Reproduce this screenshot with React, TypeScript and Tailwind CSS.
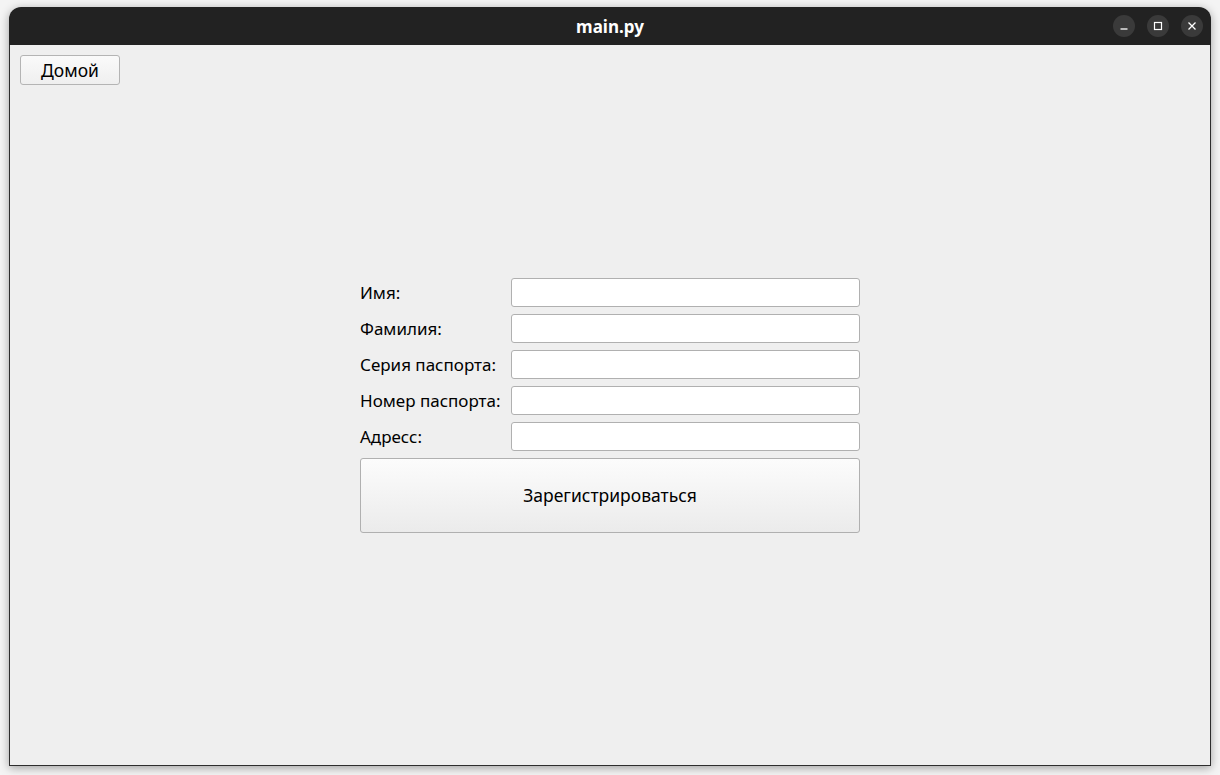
import React from "react";

const font = { fontFamily: '"Noto Sans", "DejaVu Sans", sans-serif' };

function Ctrl({ children }: { children: React.ReactNode }) {
  return (
    <div className="w-[22px] h-[22px] rounded-full bg-[#3a3a3a] flex items-center justify-center">
      {children}
    </div>
  );
}

export default function App() {
  const labels = ["Имя:", "Фамилия:", "Серия паспорта:", "Номер паспорта:", "Адресс:"];
  return (
    <div
      className="w-[1220px] h-[775px] bg-[#f4f4f4] pt-[7px] px-[9px] pb-[9px] flex"
      style={font}
    >
      <div className="flex-1 flex flex-col rounded-t-[12px] shadow-[0_2px_10px_rgba(0,0,0,0.35)]">
        <div className="h-[38px] bg-[#222222] rounded-t-[12px] flex items-center relative px-[7px]">
          <div className="flex-1 text-center text-white font-bold text-[17px] leading-none">main.py</div>
          <div className="absolute right-[8px] top-[8px] flex gap-[12px]">
            <Ctrl>
              <svg width="10" height="10" viewBox="0 0 10 10">
                <line x1="1.5" y1="8" x2="8.5" y2="8" stroke="#fff" strokeWidth="1.3" />
              </svg>
            </Ctrl>
            <Ctrl>
              <svg width="10" height="10" viewBox="0 0 10 10">
                <rect x="1.5" y="1.5" width="7" height="7" fill="none" stroke="#fff" strokeWidth="1.2" />
              </svg>
            </Ctrl>
            <Ctrl>
              <svg width="10" height="10" viewBox="0 0 10 10">
                <path d="M1.5 1.5 L8.5 8.5 M8.5 1.5 L1.5 8.5" stroke="#fff" strokeWidth="1.3" />
              </svg>
            </Ctrl>
          </div>
        </div>
        <div className="flex-1 bg-[#efefef] border-x border-b border-[#2e2e2e] p-[10px] grid">
          <div className="col-start-1 row-start-1 self-start justify-self-start">
            <button className="w-[100px] h-[30px] rounded-[3px] border border-[#b4b4b4] bg-gradient-to-b from-[#fafafa] to-[#efefef] text-[17.5px] text-black leading-none pt-[1px]">
              Домой
            </button>
          </div>
          <div className="col-start-1 row-start-1 self-center justify-self-center grid grid-cols-[151px_349px] gap-y-[7px] text-[17px] text-black">
            {labels.map((l) => (
              <React.Fragment key={l}>
                <div className="h-[29px] flex items-center leading-none">{l}</div>
                <div className="h-[29px] rounded-[3px] border border-[#b0b0b0] bg-white" />
              </React.Fragment>
            ))}
            <button className="col-span-2 h-[75px] rounded-[3px] border border-[#b0b0b0] bg-gradient-to-b from-[#fcfcfc] to-[#ebebeb] text-[17.5px] text-black">
              Зарегистрироваться
            </button>
          </div>
        </div>
      </div>
    </div>
  );
}
